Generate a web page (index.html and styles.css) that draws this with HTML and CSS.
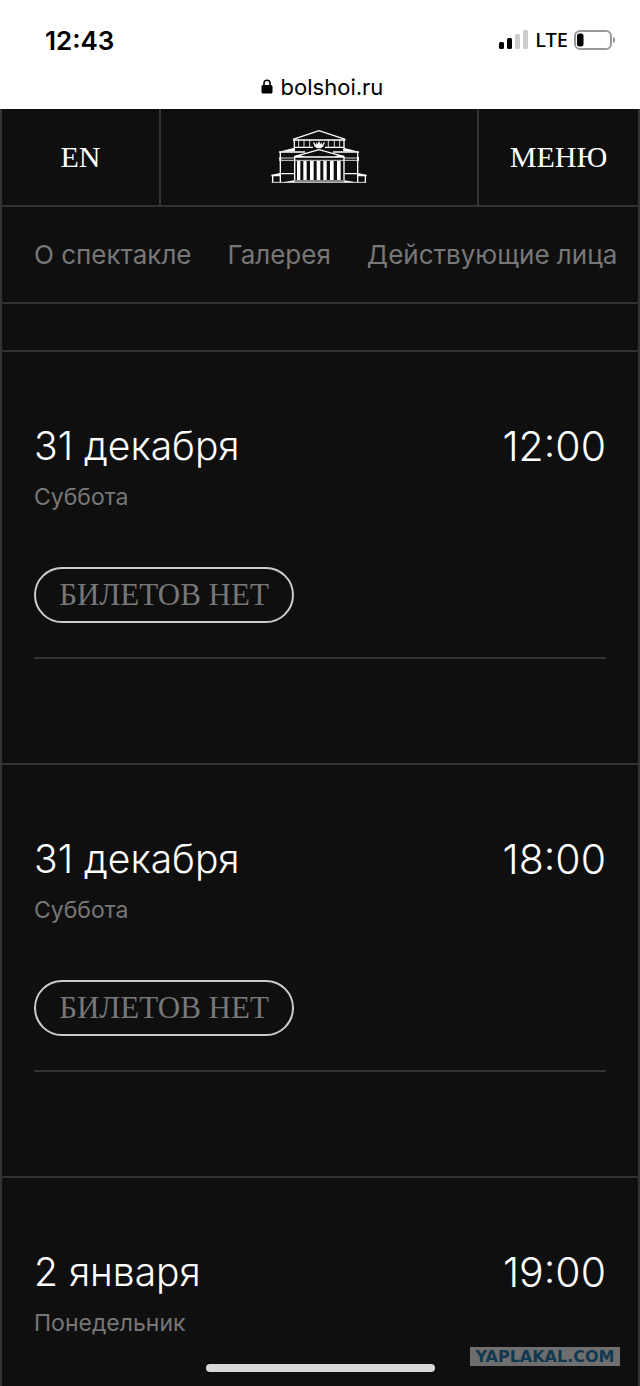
FILE: index.html
```
<!DOCTYPE html>
<html lang="ru">
<head>
  <meta charset="UTF-8">
  <meta name="viewport" content="width=device-width, initial-scale=1.0">
  <title>bolshoi.ru</title>
  <link rel="stylesheet" href="styles.css">
</head>
<body>

  <!-- Строка состояния и адрес -->
  <div class="browser">
    <div class="status">
      <span class="clock">12:43</span>
      <div class="status-icons">
        <svg class="signal" width="30" height="20" viewBox="0 0 30 20" aria-hidden="true">
          <rect x="0" y="12" width="5" height="7" rx="1.5"/>
          <rect x="8" y="8" width="5" height="11" rx="1.5"/>
          <rect class="off" x="16" y="4" width="5" height="15" rx="1.5"/>
          <rect class="off" x="24" y="0" width="5" height="19" rx="1.5"/>
        </svg>
        <span class="network">LTE</span>
        <svg class="battery" width="42" height="20" viewBox="0 0 42 20" aria-hidden="true">
          <rect class="case" x="1" y="1" width="36" height="18" rx="5"/>
          <rect x="3" y="3.5" width="6.5" height="13" rx="2.5"/>
          <path class="tip" d="M39 7c3 1 3 5 0 6z"/>
        </svg>
      </div>
    </div>
    <div class="address">
      <svg width="12" height="15" viewBox="0 0 12 15" aria-hidden="true">
        <rect x="0.5" y="6" width="11" height="8.5" rx="1.5"/>
        <path d="M3 7V4.2a3 3 0 0 1 6 0V7" fill="none" stroke="#000" stroke-width="1.6"/>
      </svg>
      <span>bolshoi.ru</span>
    </div>
  </div>

  <div class="page">
    <!-- Шапка -->
    <header class="header">
      <a class="header-link lang" href="#en">EN</a>
      <a class="logo" href="#home" aria-label="Большой театр">
        <svg width="96" height="55" viewBox="64 56 288 165" aria-hidden="true">
          <g fill="none" stroke="#fff" stroke-width="4">
            <path d="M130 87L208 61L287 87"/>
            <path d="M130 89H287M134 111H190M226 111H284"/>
            <path d="M134 88V122M283 88V122"/>
            <path d="M88 125H166M250 125H328"/>
            <path d="M92 125V216M324 125V216"/>
            <path d="M134 139L208 118L284 139"/>
            <path d="M135 140V216M283 140V216"/>
            <path d="M92 190H134M284 190H324"/>
            <path d="M69 197V216M347 197V216"/>
          </g>
          <g fill="none" stroke="#fff" stroke-width="2.5">
            <path d="M147 88V111M163 88V111M180 88V111M236 88V111M254 88V111M270 88V111"/>
            <path d="M89 143H134M284 143H328M89 150H328M66 216H350"/>
          </g>
          <g fill="#fff">
            <path d="M88 124L134 112V123Z"/>
            <path d="M328 124L282 112V123Z"/>
            <path d="M89 141h6v10h-6zM322 141h6v10h-6z"/>
            <path d="M134 137L150 134L162 138H256L268 134L284 137V142H134Z"/>
            <path d="M65 193L92 188V198H65Z"/>
            <path d="M351 193L324 188V198H351Z"/>
            <path d="M100 216L134 210V216ZM318 216L284 210V216Z"/>
            <path d="M190 95l5 2 4 8 2-10 3 7 4-11 4 11 3-7 2 10 4-8 5-2-6 14-7 5h-10l-8-5z"/>
            <path d="M142 152h10v57h-10zM161 152h10v57h-10zM181 152h11v57h-11zM201 152h11v57h-11zM221 152h10v57h-10zM241 152h11v57h-11zM262 152h11v57h-11z"/>
          </g>
          <rect x="134" y="209" width="150" height="6" fill="#888"/>
        </svg>
      </a>
      <button class="header-link" type="button">МЕНЮ</button>
    </header>

    <!-- Разделы спектакля -->
    <nav class="tabs">
      <a href="#about">О спектакле</a>
      <a href="#gallery">Галерея</a>
      <a href="#cast">Действующие лица</a>
    </nav>

    <!-- Расписание -->
    <main class="schedule">
      <section class="show">
        <div class="show-row">
          <h2>31 декабря</h2>
          <time>12:00</time>
        </div>
        <p class="weekday">Суббота</p>
        <div class="tickets">
          <button class="tickets-btn" type="button">БИЛЕТОВ НЕТ</button>
        </div>
      </section>

      <section class="show">
        <div class="show-row">
          <h2>31 декабря</h2>
          <time>18:00</time>
        </div>
        <p class="weekday">Суббота</p>
        <div class="tickets">
          <button class="tickets-btn" type="button">БИЛЕТОВ НЕТ</button>
        </div>
      </section>

      <section class="show">
        <div class="show-row">
          <h2>2 января</h2>
          <time>19:00</time>
        </div>
        <p class="weekday">Понедельник</p>
      </section>
    </main>
  </div>

  <div class="home-bar"></div>
  <div class="watermark">YAPLAKAL.COM</div>

</body>
</html>
```
FILE: styles.css
```
* {
  box-sizing: border-box;
}

body {
  margin: 0;
  min-height: 100vh;
  display: flex;
  flex-direction: column;
  background: #0f0f0f;
  color: #fff;
  font-family: Inter, "Liberation Sans", sans-serif;
}

a {
  color: inherit;
  text-decoration: none;
}

/* Строка состояния */
.browser {
  background: #fff;
  color: #000;
}

.status {
  display: flex;
  justify-content: space-between;
  align-items: center;
  height: 72px;
  padding: 8px 24px 0 45px;
}

.clock {
  font-size: 26px;
  font-weight: 600;
}

.status-icons {
  display: flex;
  align-items: center;
  gap: 6px;
}

.network {
  font-family: "Noto Sans", sans-serif;
  font-size: 20px;
  font-weight: 500;
  line-height: 24px;
}

.off {
  fill: #ccc;
}

.case {
  fill: none;
  stroke: #999;
  stroke-width: 2;
}

.tip {
  fill: #999;
}

.address {
  display: flex;
  justify-content: center;
  align-items: center;
  gap: 8px;
  height: 37px;
  padding: 0 0 8px 4px;
  font-size: 22px;
}

/* Основная страница */
.page {
  flex: 1;
  border: 2px solid #333;
  border-width: 0 2px;
}

.header {
  display: grid;
  grid-template-columns: 1fr 2fr 1fr;
  height: 98px;
  border-bottom: 2px solid #333;
}

.header-link {
  display: flex;
  justify-content: center;
  align-items: center;
  padding: 0;
  border: 0;
  background: none;
  color: #fff;
  font-family: "Liberation Serif", serif;
  font-size: 30px;
}

.lang,
.logo {
  border-right: 2px solid #333;
}

.logo {
  display: flex;
  justify-content: center;
  align-items: center;
  padding-bottom: 2px;
}

.tabs {
  display: flex;
  align-items: center;
  gap: 36px;
  height: 97px;
  padding: 0 0 0 32px;
  border-bottom: 2px solid #333;
  overflow: hidden;
  color: #777;
  font-size: 26px;
  white-space: nowrap;
}

.schedule {
  padding-top: 46px;
}

/* Карточка показа */
.show {
  padding: 70px 32px 0;
  border-top: 2px solid #333;
}

.show-row {
  display: flex;
  justify-content: space-between;
  line-height: 48px;
}

h2 {
  margin: 0;
  font-size: 39px;
  font-weight: 300;
}

time {
  font-size: 41px;
  font-weight: 300;
}

.weekday {
  margin: 12px 0 0;
  color: #777;
  font-size: 23px;
  line-height: 30px;
}

.tickets {
  margin: 55px 0 104px;
  padding-bottom: 34px;
  border-bottom: 2px solid #333;
}

.tickets-btn {
  display: block;
  width: 260px;
  height: 56px;
  padding: 0;
  border: 2px solid #ccc;
  border-radius: 28px;
  background: none;
  color: #777;
  font-family: "Liberation Serif", serif;
  font-size: 31px;
}

/* Элементы поверх страницы */
.home-bar {
  position: fixed;
  bottom: 14px;
  left: 50%;
  width: 229px;
  height: 8px;
  margin-left: -114px;
  border-radius: 4px;
  background: #d8d8d8;
}

.watermark {
  position: fixed;
  right: 20px;
  bottom: 20px;
  width: 150px;
  height: 19px;
  background: #6e6e6e;
  color: #12384f;
  font-family: "DejaVu Sans", sans-serif;
  font-size: 16px;
  font-weight: 700;
  line-height: 19px;
  text-align: center;
}
```
